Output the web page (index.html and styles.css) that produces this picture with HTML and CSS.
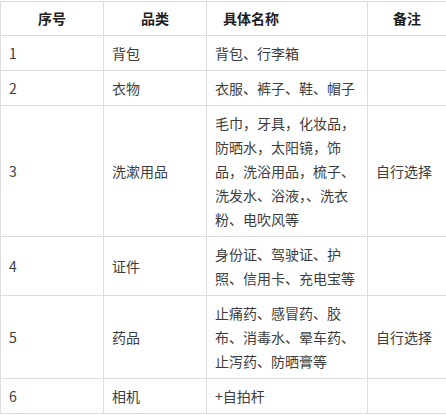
FILE: index.html
```html
<!DOCTYPE html>
<html lang="zh-CN">
<head>
<meta charset="utf-8">
<title>行李清单</title>
<link rel="stylesheet" href="styles.css">
</head>
<body>
<table class="list">
  <colgroup>
    <col class="c1"><col class="c2"><col class="c3"><col class="c4">
  </colgroup>
  <thead>
    <tr>
      <th>序号</th>
      <th>品类</th>
      <th class="th-name">具体名称</th>
      <th>备注</th>
    </tr>
  </thead>
  <tbody>
    <tr><td>1</td><td>背包</td><td>背包、行李箱</td><td></td></tr>
    <tr><td>2</td><td>衣物</td><td>衣服、裤子、鞋、帽子</td><td></td></tr>
    <tr><td>3</td><td>洗漱用品</td><td>毛巾，牙具，化妆品，防晒水，太阳镜，饰品，洗浴用品，梳子、洗发水、浴液，、洗衣粉、电吹风等</td><td>自行选择</td></tr>
    <tr><td>4</td><td>证件</td><td>身份证、驾驶证、护照、信用卡、充电宝等</td><td></td></tr>
    <tr><td>5</td><td>药品</td><td>止痛药、感冒药、胶布、消毒水、晕车药、止泻药、防晒膏等</td><td>自行选择</td></tr>
    <tr><td>6</td><td>相机</td><td>+自拍杆</td><td></td></tr>
  </tbody>
</table>
</body>
</html>
```
FILE: styles.css
```css
html, body {
  margin: 0;
  padding: 0;
  background: #fff;
}
body {
  padding-top: 1px;
}
.list {
  border-collapse: collapse;
  table-layout: fixed;
  width: 446px;
  font-family: "Noto Sans CJK SC", "Noto Sans", sans-serif;
  font-size: 14px;
  line-height: 24px;
  color: #3d3d3d;
}
.c1 { width: 103px; }
.c2 { width: 103px; }
.c3 { width: 161px; }
.c4 { width: 79px; }
.list th,
.list td {
  border: 1px solid #dcdcdc;
  padding: 5px 8px 5px 8px;
  vertical-align: middle;
  text-align: left;
  word-break: normal;
  line-break: strict;
}
.list th {
  font-weight: bold;
  color: #1e1e1e;
  text-align: center;
  padding-top: 4px;
}
.list th.th-name {
  text-align: left;
  padding-left: 16px;
}
```
